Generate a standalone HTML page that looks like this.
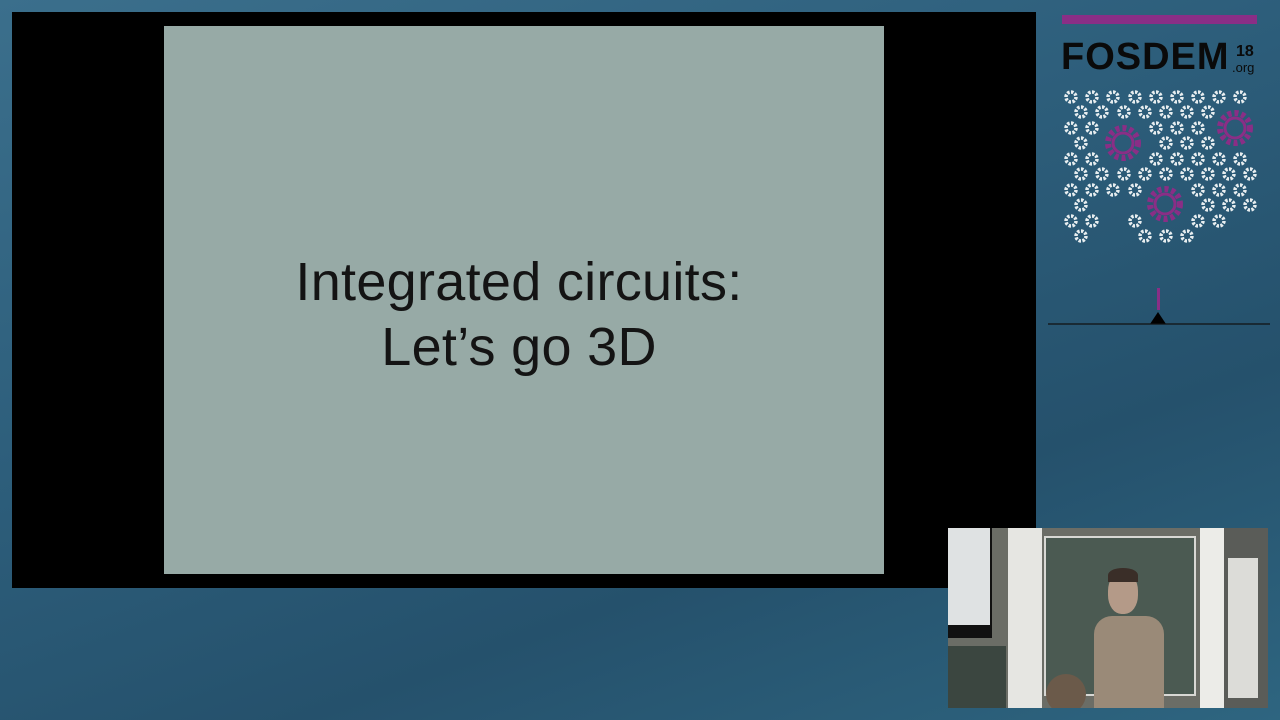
<!DOCTYPE html><html><head><style>
body{margin:0;width:1280px;height:720px;overflow:hidden;background:linear-gradient(160deg,#3b6f8c 0%,#2d5e7b 40%,#25516c 70%,#2e6580 100%);position:relative;font-family:"Liberation Sans",sans-serif}
.blk{position:absolute;left:12px;top:12px;width:1024px;height:576px;background:#000}
.slide{position:absolute;left:164px;top:26px;width:720px;height:548px;background:#97aaa6}
.t{position:absolute;left:159px;width:720px;text-align:center;font-size:54px;color:#141414;font-family:"Liberation Sans",sans-serif;letter-spacing:0.3px}
.cam{position:absolute;left:948px;top:528px;width:320px;height:180px;background:#6b6d66;overflow:hidden}
</style></head><body>
<div class="blk"></div><div class="slide"></div>
<div class="t" style="top:251px">Integrated circuits:</div>
<div class="t" style="top:316px">Let’s go 3D</div>
<div style="position:absolute;left:1062px;top:15px;width:195px;height:9px;background:#8a2e86"></div>
<div style="position:absolute;left:1061px;top:36px;font-size:38px;font-weight:bold;color:#0a0a0a;letter-spacing:1px">FOSDEM</div>
<div style="position:absolute;left:1236px;top:43px;font-size:16px;font-weight:bold;color:#0a0a0a">18</div>
<div style="position:absolute;left:1232px;top:60px;font-size:13px;color:#0a0a0a">.org</div>
<svg style="position:absolute;left:1040px;top:80px" width="240" height="250">
<g fill="none" stroke="#e8eef0" stroke-width="3.5" stroke-dasharray="2.5 1.4">
<circle cx="31" cy="17" r="5"/><circle cx="52" cy="17" r="5"/><circle cx="73" cy="17" r="5"/><circle cx="95" cy="17" r="5"/><circle cx="116" cy="17" r="5"/><circle cx="137" cy="17" r="5"/><circle cx="158" cy="17" r="5"/><circle cx="179" cy="17" r="5"/><circle cx="200" cy="17" r="5"/>
<circle cx="41" cy="32" r="5"/><circle cx="62" cy="32" r="5"/><circle cx="84" cy="32" r="5"/><circle cx="105" cy="32" r="5"/><circle cx="126" cy="32" r="5"/><circle cx="147" cy="32" r="5"/><circle cx="168" cy="32" r="5"/>
<circle cx="31" cy="48" r="5"/><circle cx="52" cy="48" r="5"/><circle cx="116" cy="48" r="5"/><circle cx="137" cy="48" r="5"/><circle cx="158" cy="48" r="5"/>
<circle cx="41" cy="63" r="5"/><circle cx="126" cy="63" r="5"/><circle cx="147" cy="63" r="5"/><circle cx="168" cy="63" r="5"/>
<circle cx="31" cy="79" r="5"/><circle cx="52" cy="79" r="5"/><circle cx="116" cy="79" r="5"/><circle cx="137" cy="79" r="5"/><circle cx="158" cy="79" r="5"/><circle cx="179" cy="79" r="5"/><circle cx="200" cy="79" r="5"/>
<circle cx="41" cy="94" r="5"/><circle cx="62" cy="94" r="5"/><circle cx="84" cy="94" r="5"/><circle cx="105" cy="94" r="5"/><circle cx="126" cy="94" r="5"/><circle cx="147" cy="94" r="5"/><circle cx="168" cy="94" r="5"/><circle cx="189" cy="94" r="5"/><circle cx="210" cy="94" r="5"/>
<circle cx="31" cy="110" r="5"/><circle cx="52" cy="110" r="5"/><circle cx="73" cy="110" r="5"/><circle cx="95" cy="110" r="5"/><circle cx="158" cy="110" r="5"/><circle cx="179" cy="110" r="5"/><circle cx="200" cy="110" r="5"/>
<circle cx="41" cy="125" r="5"/><circle cx="168" cy="125" r="5"/><circle cx="189" cy="125" r="5"/><circle cx="210" cy="125" r="5"/>
<circle cx="31" cy="141" r="5"/><circle cx="52" cy="141" r="5"/><circle cx="95" cy="141" r="5"/><circle cx="158" cy="141" r="5"/><circle cx="179" cy="141" r="5"/>
<circle cx="41" cy="156" r="5"/><circle cx="105" cy="156" r="5"/><circle cx="126" cy="156" r="5"/><circle cx="147" cy="156" r="5"/>
</g>
<g fill="none" stroke="#8a2e86" stroke-width="6" stroke-dasharray="4 3">
<circle cx="83" cy="63" r="15"/><circle cx="195" cy="48" r="15"/><circle cx="125" cy="124" r="15"/></g>
<g fill="none" stroke="#8a2e86" stroke-width="3"><circle cx="83" cy="63" r="10"/><circle cx="195" cy="48" r="10"/><circle cx="125" cy="124" r="10"/></g>
<rect x="117" y="208" width="3" height="22" fill="#8a2e86"/>
<path d="M110 244 L118 232 L126 244 Z" fill="#000"/>
<line x1="8" y1="244" x2="230" y2="244" stroke="#111" stroke-width="1.2"/>
</svg>
<div class="cam">
<div style="position:absolute;left:0;top:0;width:44px;height:110px;background:#111"></div>
<div style="position:absolute;left:0;top:0;width:42px;height:97px;background:#dfe2e3"></div>
<div style="position:absolute;left:0;top:118px;width:58px;height:62px;background:#3b4640"></div>
<div style="position:absolute;left:60px;top:0;width:34px;height:180px;background:#e6e6e2"></div>
<div style="position:absolute;left:96px;top:8px;width:148px;height:156px;background:#4b5a52;border:2px solid #d8d8d4"></div>
<div style="position:absolute;left:252px;top:0;width:24px;height:180px;background:#ecece8"></div>
<div style="position:absolute;left:276px;top:0;width:44px;height:180px;background:#5a5c58"></div>
<div style="position:absolute;left:280px;top:30px;width:30px;height:140px;background:#dcdcd8"></div>
<div style="position:absolute;left:146px;top:88px;width:70px;height:92px;background:#9a8a78;border-radius:18px 18px 0 0"></div>
<div style="position:absolute;left:160px;top:44px;width:30px;height:42px;background:#b49a88;border-radius:45%"></div>
<div style="position:absolute;left:160px;top:40px;width:30px;height:14px;background:#3a2e28;border-radius:50% 50% 0 0"></div>
<div style="position:absolute;left:98px;top:146px;width:40px;height:40px;background:#6b5a4a;border-radius:50%"></div>
</div>
</body></html>
